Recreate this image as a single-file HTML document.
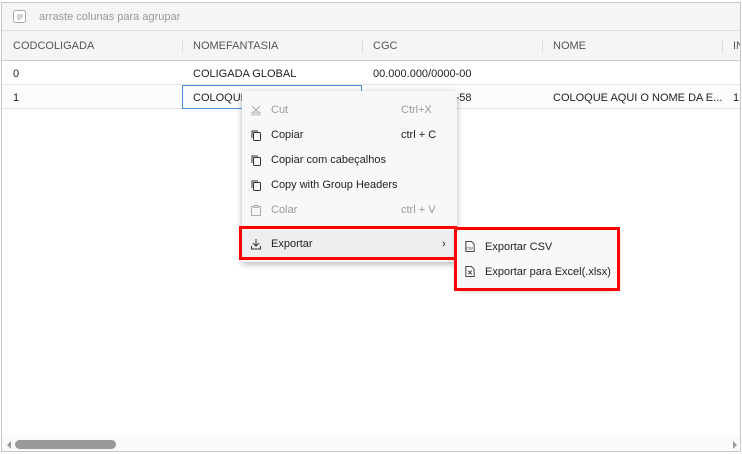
<!DOCTYPE html>
<html><head><style>
*{box-sizing:border-box;margin:0;padding:0}
body{width:742px;height:454px;background:#fff;font-family:"Liberation Sans",sans-serif;font-size:11px;color:#222;position:relative;overflow:hidden}
.frame{position:absolute;left:1px;top:2px;width:740px;height:450px;border:1px solid #c8c8c8;overflow:hidden}
.group{position:absolute;left:0;top:0;width:100%;height:28px;background:#f5f5f5;border-bottom:1px solid #ddd;color:#999}
.hdr{position:absolute;left:0;top:28px;width:100%;height:30px;background:#f5f5f5;border-bottom:1px solid #ccc;color:#555}
.c{position:absolute;white-space:nowrap}
.sep{position:absolute;top:8px;width:1px;height:14px;background:#ddd}
.row{position:absolute;left:0;width:100%;height:24px;border-bottom:1px solid #e5e5e5}
.menu{position:absolute;left:242px;top:91px;width:215px;height:171px;background:#f8f8f8;box-shadow:0 2px 6px rgba(0,0,0,.3)}
.mi{position:absolute;left:0;width:100%;height:25px;line-height:25px}
.mi .t{position:absolute;left:29px}
.mi .s{position:absolute;left:159px}
.dis{color:#999}
.ic{position:absolute;left:9px;top:7px;width:10px;height:11px}
.red{position:absolute;border:3px solid #f00}
</style></head><body>
<div class="frame">
 <div class="group">
  <svg style="position:absolute;left:11px;top:7px" width="13" height="13"><rect x="0.5" y="0.5" width="12" height="12" rx="2" fill="#fff" stroke="#aaa"/><path d="M4 5h6M4 7h6M4 9h4" stroke="#aaa"/></svg>
  <span class="c" style="left:37px;top:8px">arraste colunas para agrupar</span>
 </div>
 <div class="hdr">
  <span class="c" style="left:11px;top:9px">CODCOLIGADA</span><div class="sep" style="left:180px"></div>
  <span class="c" style="left:191px;top:9px">NOMEFANTASIA</span><div class="sep" style="left:360px"></div>
  <span class="c" style="left:371px;top:9px">CGC</span><div class="sep" style="left:540px"></div>
  <span class="c" style="left:551px;top:9px">NOME</span><div class="sep" style="left:720px"></div>
  <span class="c" style="left:731px;top:9px">IN</span>
 </div>
 <div class="row" style="top:58px">
  <span class="c" style="left:11px;top:7px">0</span>
  <span class="c" style="left:191px;top:7px">COLIGADA GLOBAL</span>
  <span class="c" style="left:371px;top:7px">00.000.000/0000-00</span>
 </div>
 <div class="row" style="top:82px;background:#fbfcfd">
  <span class="c" style="left:11px;top:7px">1</span>
  <div style="position:absolute;left:180px;top:0;width:180px;height:24px;border:1px solid #4a90d9"></div>
  <span class="c" style="left:191px;top:7px">COLOQUE</span>
  <span class="c" style="left:371px;top:7px">00.000.000/0000-58</span>
  <span class="c" style="left:551px;top:7px">COLOQUE AQUI O NOME DA E...</span>
  <span class="c" style="left:731px;top:7px">1</span>
 </div>
 <div style="position:absolute;left:0;top:432px;width:100%;height:16px;background:#fafafa"></div>
 <div style="position:absolute;left:5px;top:438px;width:0;height:0;border-top:4px solid transparent;border-bottom:4px solid transparent;border-right:4px solid #999"></div>
 <div style="position:absolute;left:13px;top:437px;width:101px;height:9px;border-radius:5px;background:#999"></div>
 <div style="position:absolute;left:731px;top:438px;width:0;height:0;border-top:4px solid transparent;border-bottom:4px solid transparent;border-left:4px solid #999"></div>
</div>
<div class="menu">
 <div class="mi dis" style="top:7px"><svg class="ic" viewBox="0 0 10 11"><circle cx="2.5" cy="8.5" r="1.6" fill="none" stroke="#aaa"/><circle cx="7.5" cy="8.5" r="1.6" fill="none" stroke="#aaa"/><path d="M1 1l6 6M9 1L3 7" stroke="#aaa"/></svg><span class="t">Cut</span><span class="s">Ctrl+X</span></div>
 <div class="mi" style="top:32px"><svg class="ic" viewBox="0 0 10 11"><rect x="2.5" y="2.5" width="7" height="8" rx="1" fill="none" stroke="#333"/><path d="M1 8V1h6" fill="none" stroke="#333"/></svg><span class="t">Copiar</span><span class="s">ctrl + C</span></div>
 <div class="mi" style="top:57px"><svg class="ic" viewBox="0 0 10 11"><rect x="2.5" y="2.5" width="7" height="8" rx="1" fill="none" stroke="#333"/><path d="M1 8V1h6" fill="none" stroke="#333"/></svg><span class="t">Copiar com cabeçalhos</span></div>
 <div class="mi" style="top:82px"><svg class="ic" viewBox="0 0 10 11"><rect x="2.5" y="2.5" width="7" height="8" rx="1" fill="none" stroke="#333"/><path d="M1 8V1h6" fill="none" stroke="#333"/></svg><span class="t">Copy with Group Headers</span></div>
 <div class="mi dis" style="top:107px"><svg class="ic" viewBox="0 0 10 11"><rect x="0.5" y="1.5" width="9" height="9" fill="none" stroke="#aaa"/><rect x="3" y="0.5" width="4" height="2" fill="#fff" stroke="#aaa"/></svg><span class="t">Colar</span><span class="s">ctrl + V</span></div>
 <div style="position:absolute;left:0;top:135px;width:100%;height:1px;background:#ddd"></div>
 <div class="mi" style="top:139px;height:28px;line-height:28px;background:#eceeef"><svg class="ic" style="top:9px" viewBox="0 0 10 11"><path d="M5 0v7M2 4l3 3 3-3M0.5 7v3h9V7" fill="none" stroke="#333"/></svg><span class="t">Exportar</span><span class="s" style="left:200px">›</span></div>
</div>
<div class="red" style="left:239px;top:226px;width:218px;height:34px"></div>
<div style="position:absolute;left:457px;top:230px;width:160px;height:58px;background:#f8f8f8;box-shadow:0 2px 6px rgba(0,0,0,.3)">
 <div class="mi" style="top:5px;height:24px"><svg class="ic" style="left:8px;top:6px" viewBox="0 0 10 12" width="10" height="12"><path d="M0.5 0.5h6l3 3v8h-9z" fill="#fff" stroke="#333"/><text x="1" y="9" font-size="3.5" font-family="Liberation Sans">CSV</text></svg><span class="t" style="left:28px">Exportar CSV</span></div>
 <div class="mi" style="top:30px;height:24px"><svg class="ic" style="left:8px;top:6px" viewBox="0 0 10 12" width="10" height="12"><path d="M0.5 0.5h6l3 3v8h-9z" fill="#fff" stroke="#333"/><path d="M3 5l4 4M7 5l-4 4" stroke="#333"/></svg><span class="t" style="left:28px">Exportar para Excel(.xlsx)</span></div>
</div>
<div class="red" style="left:454px;top:227px;width:166px;height:64px"></div>
</body></html>
